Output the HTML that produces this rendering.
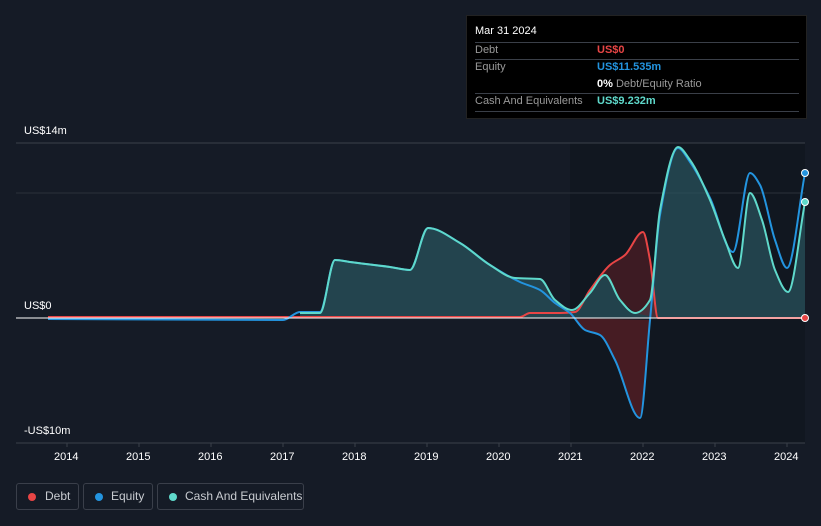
<!DOCTYPE html>
<html><head><style>
body{margin:0;width:821px;height:526px;background:#151b26;font-family:"Liberation Sans",sans-serif;overflow:hidden;position:relative}
.t{position:absolute;color:#fff;font-size:11px}
.tip{position:absolute;left:466px;top:15px;width:341px;height:104px;background:#000;border:1px solid #222;box-sizing:border-box}
.tip div{position:absolute;font-size:11px}
.ln{position:absolute;left:8px;width:324px;height:1px;background:#3a3f48}
.lg{position:absolute;top:483px;height:27px;border:1px solid #3a3f4a;border-radius:3px;box-sizing:border-box;color:#c8cbd0;font-size:12px;line-height:25px}
.lg i{position:absolute;left:11px;top:9px;width:8px;height:8px;border-radius:50%}
</style></head><body>
<svg id="s" width="821" height="526" style="position:absolute;left:0;top:0">
<rect x="570" y="143" width="235" height="300" fill="#111720"/>
<line x1="16" y1="143" x2="805" y2="143" stroke="#3a404a"/>
<line x1="16" y1="193" x2="805" y2="193" stroke="#2a303a"/>
<line x1="16" y1="443" x2="805" y2="443" stroke="#3a404a"/>
<g stroke="#3a404a"><line x1="67" y1="443" x2="67" y2="447"/><line x1="139" y1="443" x2="139" y2="447"/><line x1="211" y1="443" x2="211" y2="447"/><line x1="283" y1="443" x2="283" y2="447"/><line x1="355" y1="443" x2="355" y2="447"/><line x1="427" y1="443" x2="427" y2="447"/><line x1="499" y1="443" x2="499" y2="447"/><line x1="571" y1="443" x2="571" y2="447"/><line x1="643" y1="443" x2="643" y2="447"/><line x1="715" y1="443" x2="715" y2="447"/><line x1="787" y1="443" x2="787" y2="447"/></g>
<path id="ca" fill="#2a5560" fill-opacity="0.7"/>
<path id="ra" fill="#6a1f26" fill-opacity="0.6"/>
<path id="rb" fill="#6a1f26" fill-opacity="0.5"/>
<path id="d" fill="none" stroke="#e84545" stroke-width="2"/>
<path id="e" fill="none" stroke="#2394df" stroke-width="2"/>
<path id="c" fill="none" stroke="#5fd9cb" stroke-width="2"/>
<line x1="16" y1="318" x2="805" y2="318" stroke="#fff" stroke-width="1"/>
<circle cx="805" cy="318" r="3.5" fill="#e84545" stroke="#fff"/>
<circle cx="805" cy="173" r="3.5" fill="#2394df" stroke="#fff"/>
<circle cx="805" cy="202" r="3.5" fill="#5fd9cb" stroke="#fff"/>
</svg>
<script>
function cr(p){var n=p.length,dx=[],m=[],t=[];for(var i=0;i<n-1;i++){dx[i]=p[i+1][0]-p[i][0];m[i]=(p[i+1][1]-p[i][1])/dx[i];}
t[0]=m[0];t[n-1]=m[n-2];for(i=1;i<n-1;i++){if(m[i-1]*m[i]<=0)t[i]=0;else{var w1=2*dx[i]+dx[i-1],w2=dx[i]+2*dx[i-1];t[i]=(w1+w2)/(w1/m[i-1]+w2/m[i]);}}
var s="M"+p[0][0]+","+p[0][1];for(i=0;i<n-1;i++){var h=dx[i]/3;s+="C"+(p[i][0]+h)+","+(p[i][1]+t[i]*h)+" "+(p[i+1][0]-h)+","+(p[i+1][1]-t[i+1]*h)+" "+p[i+1][0]+","+p[i+1][1];}return s;}
var C=[[300,313],[320,313],[335,260],[350,262],[390,267],[410,270],[428,228],[460,243],[490,265],[515,278],[540,279],[555,300],[572,310],[590,293],[605,275],[620,300],[635,313],[650,300],[660,210],[678,147],[690,160],[710,200],[725,240],[738,268],[750,193],[762,220],[775,270],[788,292],[805,202]];
var E=[[48,319],[283,320],[300,312],[320,312],[335,260],[350,262],[390,267],[410,270],[428,228],[460,243],[490,265],[520,282],[540,290],[555,303],[570,313],[585,330],[600,335],[615,360],[640,418],[650,320],[660,215],[678,148],[690,162],[710,198],[733,252],[750,173],[760,185],[775,240],[787,268],[805,173]];
var D=[[48,317],[520,317],[530,313],[560,313],[575,312],[590,290],[610,265],[625,255],[643,232],[650,260],[658,318],[805,318]];
function g(i){return document.getElementById(i)}
g("c").setAttribute("d",cr(C));g("e").setAttribute("d",cr(E));g("d").setAttribute("d",cr(D));
g("ca").setAttribute("d",cr(C)+"L805,318L300,318Z");
g("ra").setAttribute("d",cr(E.slice(14,20))+"L570,318Z");
g("rb").setAttribute("d",cr(D.slice(4,11))+"L635,313L620,300L605,275L590,293Z");
</script>
<div class="t" style="left:24px;top:125px">US$14m</div>
<div class="t" style="left:24px;top:300px">US$0</div>
<div class="t" style="left:24px;top:425px">-US$10m</div>
<div class="t" style="left:54px;top:451px">2014</div><div class="t" style="left:126px;top:451px">2015</div><div class="t" style="left:198px;top:451px">2016</div><div class="t" style="left:270px;top:451px">2017</div><div class="t" style="left:342px;top:451px">2018</div><div class="t" style="left:414px;top:451px">2019</div><div class="t" style="left:486px;top:451px">2020</div><div class="t" style="left:558px;top:451px">2021</div><div class="t" style="left:630px;top:451px">2022</div><div class="t" style="left:702px;top:451px">2023</div><div class="t" style="left:774px;top:451px">2024</div>
<div class="tip">
<div style="left:8px;top:9px;color:#fff">Mar 31 2024</div>
<div class="ln" style="top:26px"></div>
<div style="left:8px;top:28px;color:#999">Debt</div><div style="left:130px;top:28px;color:#e84545;font-weight:bold">US$0</div>
<div class="ln" style="top:43px"></div>
<div style="left:8px;top:45px;color:#999">Equity</div><div style="left:130px;top:45px;color:#2394df;font-weight:bold">US$11.535m</div>
<div style="left:130px;top:62px;color:#999"><b style="color:#fff">0%</b> Debt/Equity Ratio</div>
<div class="ln" style="top:77px"></div>
<div style="left:8px;top:79px;color:#999">Cash And Equivalents</div><div style="left:130px;top:79px;color:#5fd9cb;font-weight:bold">US$9.232m</div>
<div class="ln" style="top:95px"></div>
</div>
<div class="lg" style="left:16px;width:63px"><i style="background:#e84545"></i><span style="margin-left:28px">Debt</span></div>
<div class="lg" style="left:83px;width:70px"><i style="background:#2394df"></i><span style="margin-left:27px">Equity</span></div>
<div class="lg" style="left:157px;width:147px"><i style="background:#5fd9cb"></i><span style="margin-left:27px">Cash And Equivalents</span></div>
</body></html>
